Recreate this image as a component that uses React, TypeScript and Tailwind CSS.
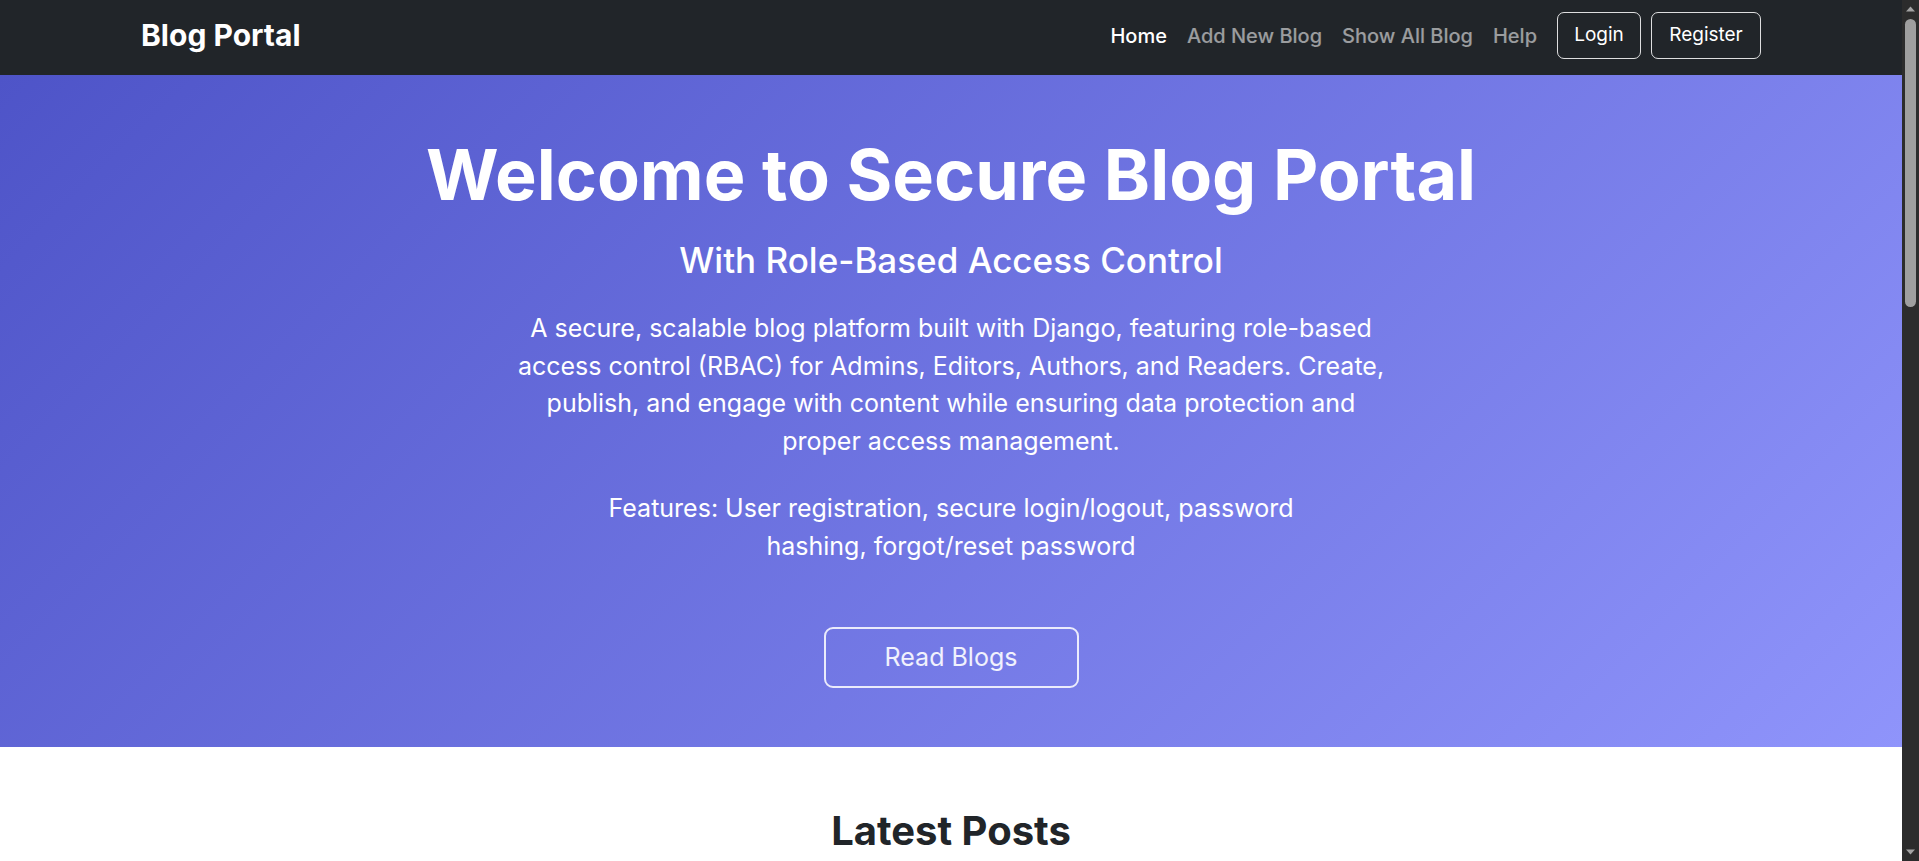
import React from "react";

interface Post {
  title: string;
  author: string;
  excerpt: string;
}

const posts: Post[] = [
  {
    title: "Getting Started with Django",
    author: "Admin",
    excerpt: "A short introduction to building web apps with Django and its batteries-included tooling.",
  },
  {
    title: "Understanding RBAC",
    author: "Editor",
    excerpt: "How role-based access control keeps content safe for admins, editors, authors and readers.",
  },
  {
    title: "Password Hashing 101",
    author: "Author",
    excerpt: "Why we never store plain passwords, and how Django hashes them for you.",
  },
];

const navLinks = ["Home", "Add New Blog", "Show All Blog", "Help"];

// the page's (dark) scrollbar, drawn since the headless shot hides native ones
const ScrollBar: React.FC = () => (
  <div className="w-[17px] shrink-0 bg-[#2c2c2c] flex flex-col items-center py-[3px]">
    <svg width="9" height="6" viewBox="0 0 9 6" className="mt-[3px]">
      <path d="M0 5.5 L4.5 0.5 L9 5.5 Z" fill="#a3a3a3" />
    </svg>
    <div className="mt-[7px] w-[11px] h-[288px] rounded-full bg-[#9f9f9f]" />
    <div className="flex-1" />
    <svg width="9" height="6" viewBox="0 0 9 6" className="mb-[3px]">
      <path d="M0 0.5 L4.5 5.5 L9 0.5 Z" fill="#a3a3a3" />
    </svg>
  </div>
);

const App: React.FC = () => {
  return (
    <div className="h-screen flex bg-white" style={{ fontFamily: "Inter, 'Noto Sans', sans-serif" }}>
      <div className="flex-1 min-w-0 overflow-y-auto [scrollbar-width:none] text-[#212529]">
        {/* navbar */}
        <nav className="h-[75px] bg-[#212529] flex items-center justify-between px-[141px] pb-[4px]">
          <a className="text-[30px] font-bold text-white">Blog Portal</a>
          <div className="flex items-center">
            <ul className="flex items-center">
              {navLinks.map((l, i) => (
                <li key={l}>
                  <a
                    className={`block px-[10px] text-[20px] font-medium ${
                      i === 0 ? "text-white" : "text-white/55"
                    }`}
                  >
                    {l}
                  </a>
                </li>
              ))}
            </ul>
            <div className="flex items-center gap-[10px] ml-[10px]">
              <button className="h-[47px] w-[84px] rounded-[7px] border border-white/85 text-[19px] text-white">
                Login
              </button>
              <button className="h-[47px] w-[110px] rounded-[7px] border border-white/85 text-[19px] text-white">
                Register
              </button>
            </div>
          </div>
        </nav>

        {/* hero */}
        <section className="bg-[linear-gradient(135deg,#4e54c8,#8f94fb)] text-white text-center pt-[58px] pb-[59px] flex flex-col items-center">
          <h1 className="text-[70px] font-bold leading-[1.2]">Welcome to Secure Blog Portal</h1>
          <h2 className="mt-[22px] text-[35px] font-medium leading-[1.2]">With Role-Based Access Control</h2>
          <p className="mt-[29px] max-w-[886px] text-[25px] leading-[37.5px]">
            A secure, scalable blog platform built with Django, featuring role-based access control (RBAC) for
            Admins, Editors, Authors, and Readers. Create, publish, and engage with content while ensuring data
            protection and proper access management.
          </p>
          <p className="mt-[30px] max-w-[720px] text-[25px] leading-[37.5px]">
            Features: User registration, secure login/logout, password hashing, forgot/reset password
          </p>
          <button className="mt-[62px] h-[61px] w-[255px] rounded-[9px] border-2 border-white/85 text-[25px] text-white/90">
            Read Blogs
          </button>
        </section>

        {/* latest posts */}
        <section className="pt-[60px] pb-20 px-[141px]">
          <h2 className="text-center text-[40px] font-bold leading-[1.2]">Latest Posts</h2>
          <div className="mt-10 grid grid-cols-3 gap-6">
            {posts.map((p) => (
              <div key={p.title} className="rounded-lg border border-gray-200 p-6 shadow-sm">
                <h3 className="text-xl font-semibold">{p.title}</h3>
                <p className="mt-1 text-sm text-gray-500">by {p.author}</p>
                <p className="mt-3 text-base text-gray-700">{p.excerpt}</p>
                <button className="mt-4 rounded-md bg-[#4e54c8] px-4 py-2 text-sm text-white">Read More</button>
              </div>
            ))}
          </div>
        </section>
      </div>
      <ScrollBar />
    </div>
  );
};

export default App;
